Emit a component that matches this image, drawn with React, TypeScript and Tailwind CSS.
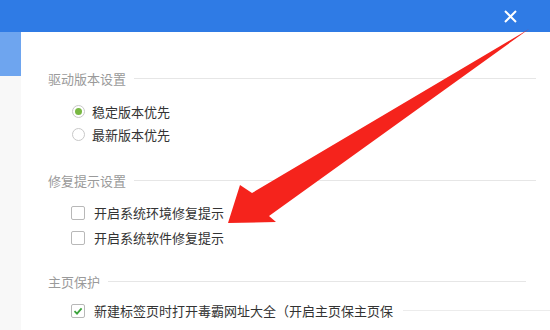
const font = { fontFamily: '"Microsoft YaHei", "Noto Sans CJK SC", sans-serif' };

function SectionTitle({ label, lineEnd }: { label: string; lineEnd: string }) {
  return (
    <div className="flex h-[20px] items-center">
      <span className="text-[13px] leading-none text-[#9a9a9a]">{label}</span>
      <div className={`ml-[8px] h-px bg-[#e6e6e6] ${lineEnd}`} />
    </div>
  );
}

function Radio({ label, checked }: { label: string; checked?: boolean }) {
  return (
    <div className="flex h-[23px] items-center pl-[24px]">
      <span className="flex h-[13px] w-[13px] items-center justify-center rounded-full border border-[#c8c8c8] bg-white">
        {checked && <span className="h-[7px] w-[7px] rounded-full bg-[#79b843]" />}
      </span>
      <span className="ml-[7px] text-[13px] leading-none text-[#333]">{label}</span>
    </div>
  );
}

function Check({ label, checked }: { label: string; checked?: boolean }) {
  return (
    <div className="flex h-[25px] items-center pl-[23px]">
      <span className="flex h-[14px] w-[14px] items-center justify-center rounded-[2px] border border-[#b8b8b8] bg-white">
        {checked && (
          <svg width="10" height="10" viewBox="0 0 10 10">
            <path d="M1.5 5.2 L4 7.6 L8.6 2.4" fill="none" stroke="#3ca33c" strokeWidth="1.8" />
          </svg>
        )}
      </span>
      <span className="ml-[9px] text-[13px] leading-none text-[#333]">{label}</span>
    </div>
  );
}

export default function App() {
  return (
    <div className="relative h-[330px] w-[550px] overflow-hidden bg-white" style={font}>
      <div className="flex h-[32px] items-center justify-end bg-[#2f7be5] pr-[33px]">
        <svg width="13" height="13" viewBox="0 0 13 13">
          <path d="M1 1 L12 12 M12 1 L1 12" stroke="white" strokeWidth="2" />
        </svg>
      </div>
      <div className="flex h-[298px]">
        <div className="flex w-[21px] flex-col bg-[#f8f8f8]">
          <div className="h-[44px] bg-[#6ea5ef]" />
        </div>
        <div className="flex flex-1 flex-col pl-[27px] pt-[36px]">
          <SectionTitle label="驱动版本设置" lineEnd="w-[402px]" />
          <div className="mt-[12px] flex flex-col">
            <Radio label="稳定版本优先" checked />
            <Radio label="最新版本优先" />
          </div>
          <div className="mt-[24px]">
            <SectionTitle label="修复提示设置" lineEnd="w-[402px]" />
          </div>
          <div className="mt-[10px] flex flex-col">
            <Check label="开启系统环境修复提示" />
            <Check label="开启系统软件修复提示" />
          </div>
          <div className="mt-[21px]">
            <SectionTitle label="主页保护" lineEnd="w-[418px]" />
          </div>
          <div className="mt-[7px] flex items-center">
            <Check label="新建标签页时打开毒霸网址大全（开启主页保主页保" checked />
            <div className="ml-[10px] h-px flex-1 bg-[#ececec]" />
          </div>
        </div>
      </div>
      <svg className="pointer-events-none absolute left-0 top-0" width="550" height="330" viewBox="0 0 550 330">
        <polygon
          points="228,223 240,185 252,193 529,29 269,216 276,222"
          fill="#f5231c"
        />
      </svg>
    </div>
  );
}
